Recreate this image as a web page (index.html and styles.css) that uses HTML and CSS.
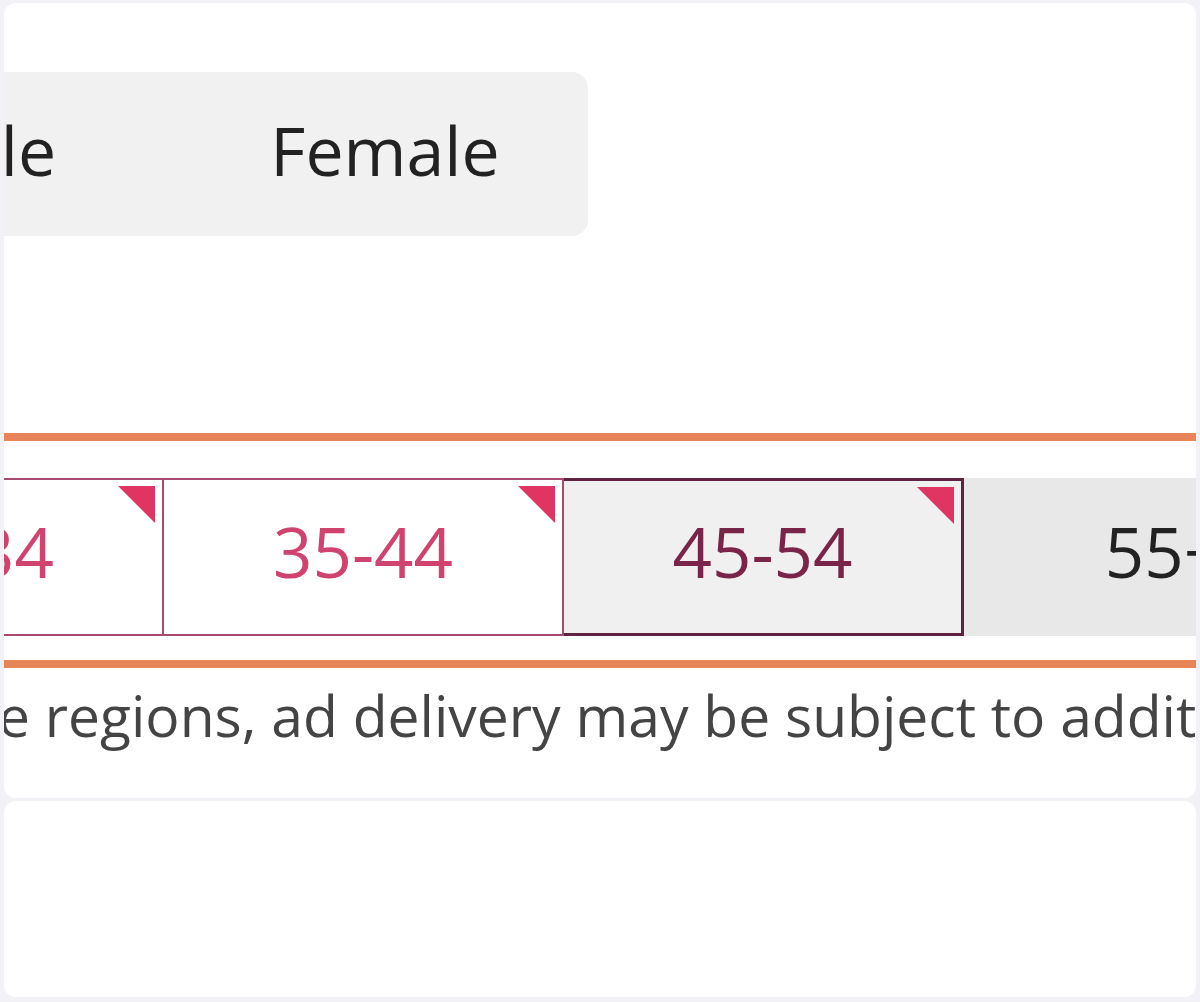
FILE: index.html
```html
<!DOCTYPE html>
<html>
<head>
    <title>Audience targeting</title>
    <link rel="stylesheet" href="styles.css">
</head>
<body>
    <div class="card card-main">
        <div class="gender-wrap">
            <div class="segmented">
                <div class="segment">Male</div>
                <div class="segment">Female</div>
            </div>
        </div>

        <div class="age-band">
            <div class="age-row">
                <div class="age-cell picked">25-34<span class="corner"></span></div>
                <div class="age-cell picked">35-44<span class="corner"></span></div>
                <div class="age-cell picked focus">45-54<span class="corner"></span></div>
                <div class="age-cell">55+</div>
            </div>
        </div>

        <p class="notice">In some regions, ad delivery may be subject to additional review and local rules.</p>
    </div>

    <div class="card card-next"></div>
</body>
</html>
```

FILE: styles.css
```css
body {
    margin: 0;
    padding: 3px 4px;
    background-color: #f2f1f6;
    font-family: "Open Sans", "Liberation Sans", sans-serif;
    color: #222;
}
.card {
    background-color: #fff;
    border-radius: 12px;
    overflow: hidden;
}
.card-main {
    height: 795px;
}
.card-next {
    margin-top: 3px;
    height: 196px;
}
.gender-wrap {
    padding-top: 69px;
    margin-left: -228px;
}
.segmented {
    display: flex;
    width: 812px;
    height: 164px;
    background-color: #f1f1f1;
    border-radius: 16px;
}
.segment {
    flex: 1;
    display: flex;
    align-items: center;
    justify-content: center;
    padding-bottom: 10px;
    font-size: 68px;
    color: #222;
}
.age-band {
    margin-top: 197px;
    border-top: 8px solid #e8845a;
    border-bottom: 8px solid #e8845a;
    padding: 37px 0 24px;
}
.age-row {
    display: flex;
    margin-left: -240px;
    height: 158px;
}
.age-cell {
    position: relative;
    flex: 0 0 400px;
    box-sizing: border-box;
    display: flex;
    align-items: center;
    justify-content: center;
    padding-bottom: 12px;
    font-size: 69px;
    background-color: #e8e8e8;
    color: #222;
}
.age-cell.picked {
    background-color: #fff;
    border: 2px solid #a84a70;
    color: #d0436f;
}
.age-cell.picked + .age-cell.picked {
    border-left: none;
}
.age-cell.focus {
    background-color: #f0f0f0;
    border: 3px solid #5e2340;
    color: #7a2449;
}
.corner {
    position: absolute;
    top: 6px;
    right: 7px;
    width: 0;
    height: 0;
    border-top: 37px solid #e03563;
    border-left: 37px solid transparent;
}
.notice {
    margin: 8px 0 0 -186px;
    white-space: nowrap;
    font-size: 57px;
    color: #444;
}
```
